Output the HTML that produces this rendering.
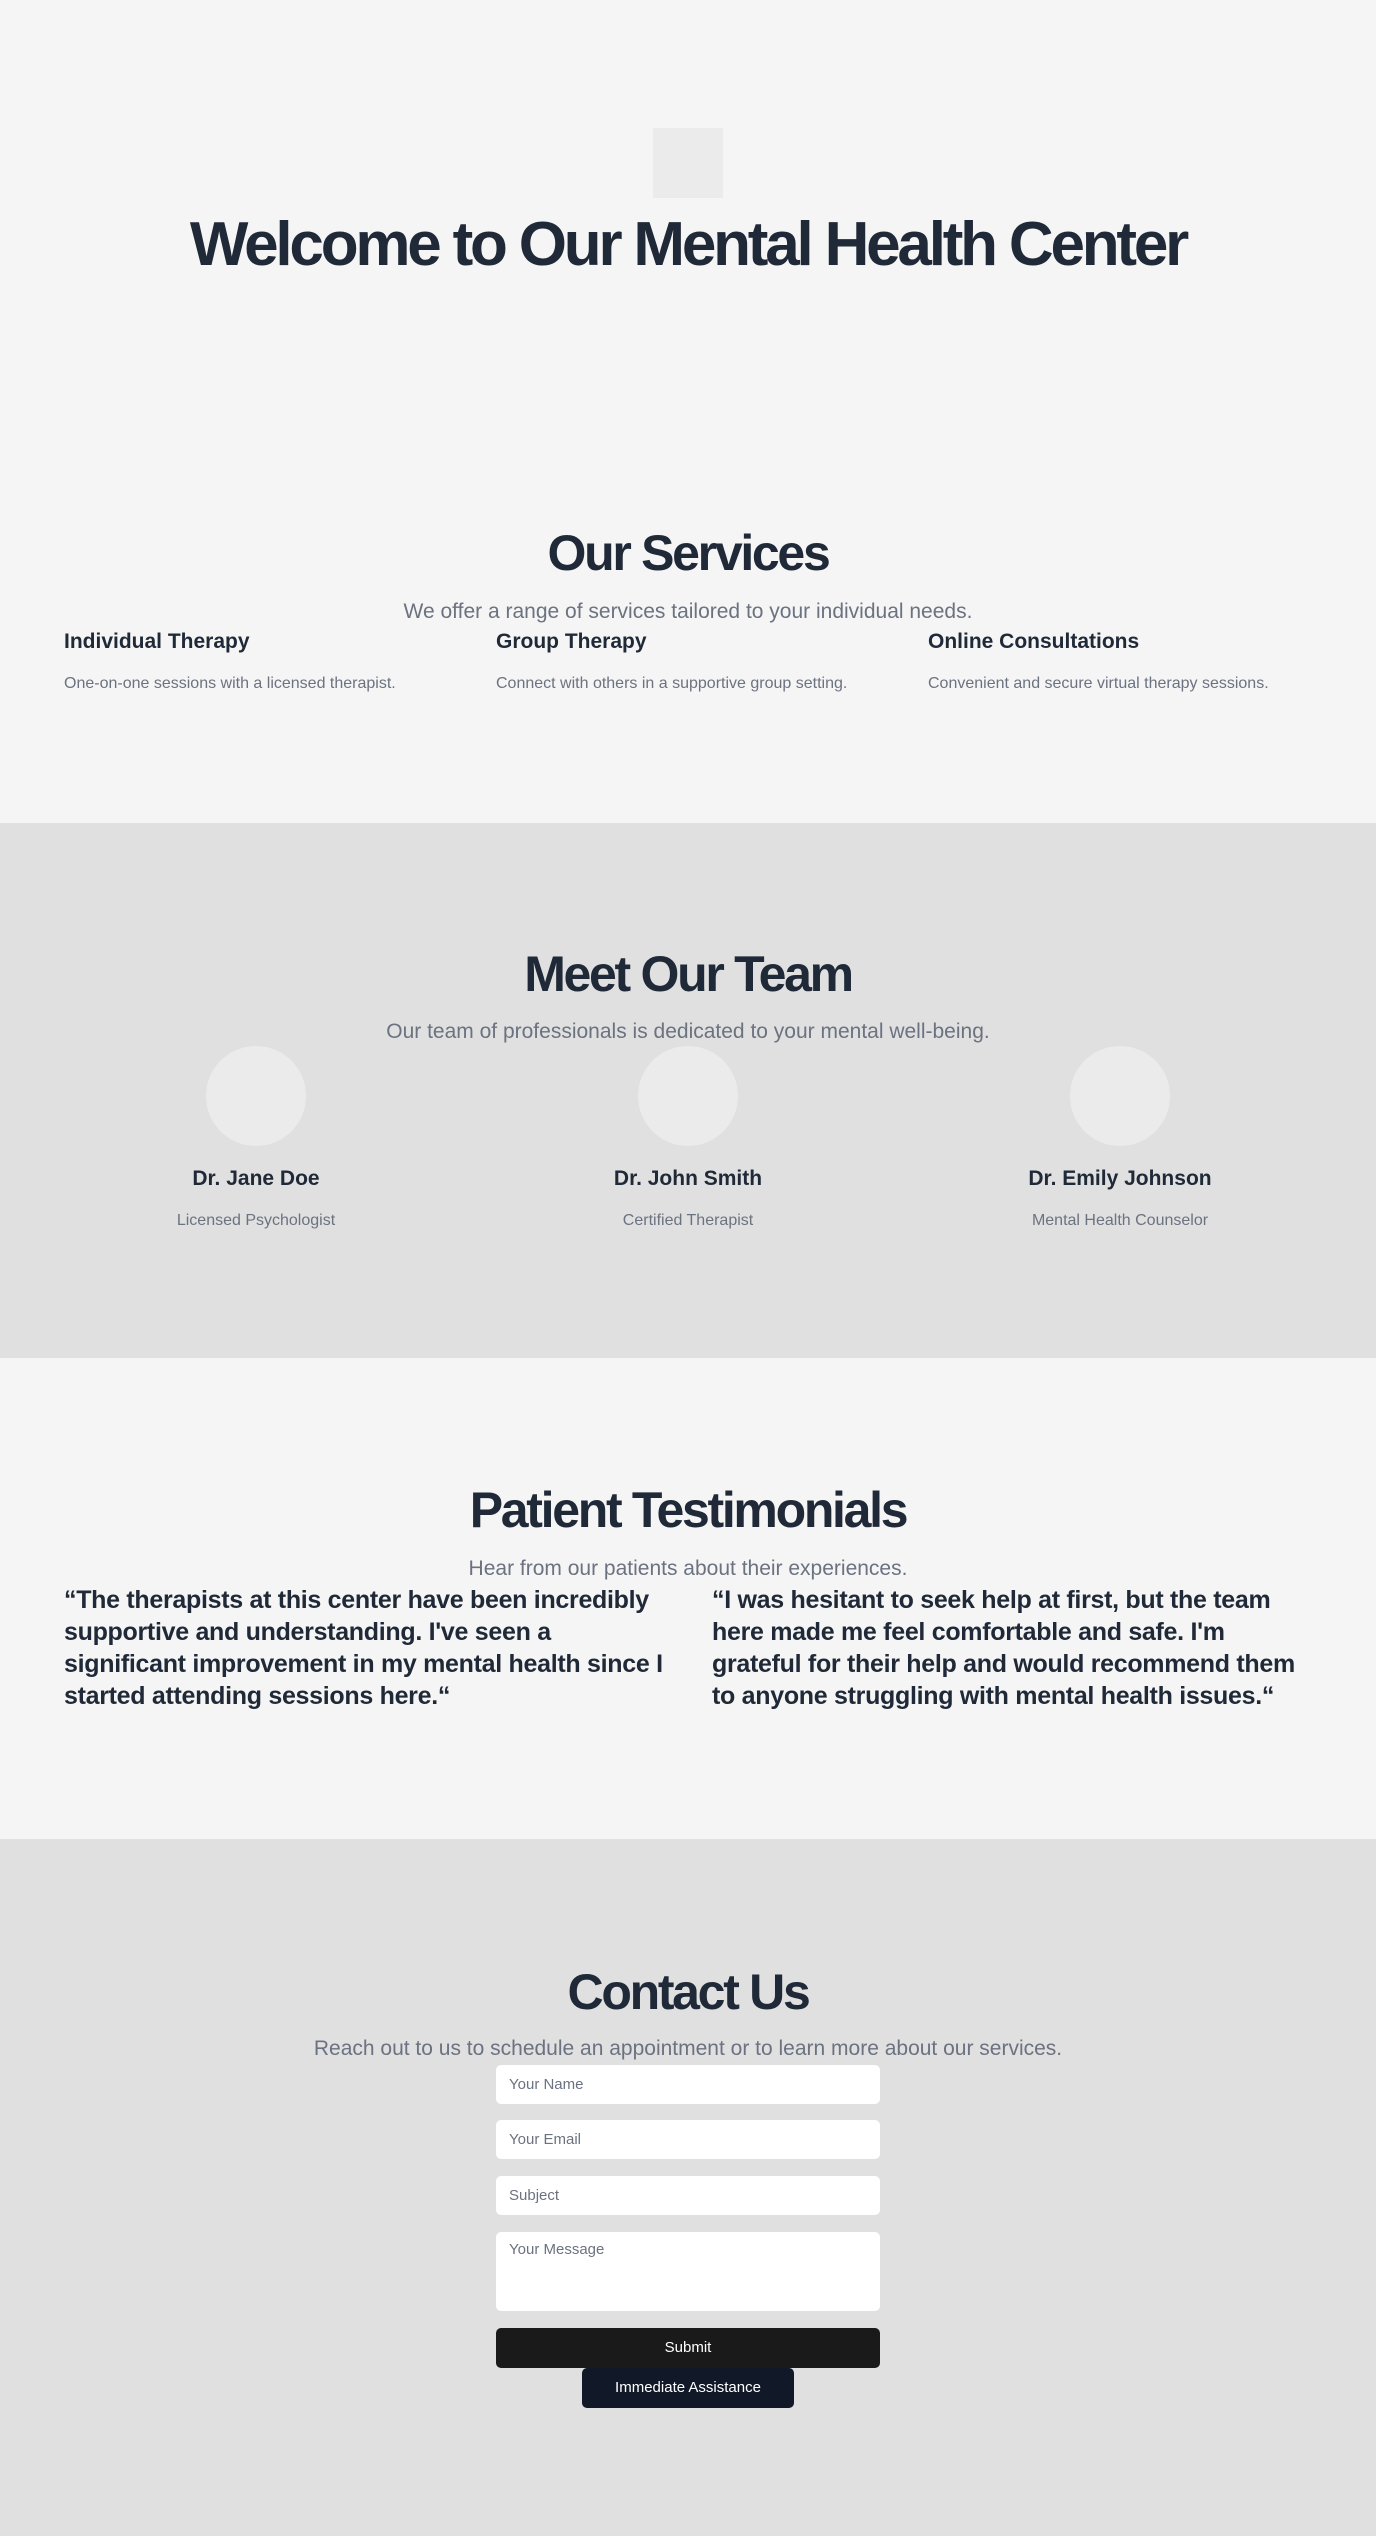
<!DOCTYPE html>
<html><head><meta charset="utf-8"><style>
*{margin:0;padding:0;box-sizing:border-box}
body{width:1376px;height:2536px;position:relative;background:#f5f5f5;font-family:"Liberation Sans",sans-serif;overflow:hidden}
.a{position:absolute}
.c{left:0;width:1376px;text-align:center}
.h{color:#1f2937;font-weight:bold}
.g{color:#6b7280}
.band{position:absolute;left:0;width:1376px;background:#e0e0e0}
.h2{font-size:50px;letter-spacing:-2.3px;line-height:60px}
.sub{font-size:21px;line-height:30px}
.st{font-size:21px;line-height:30px;color:#1f2937;font-weight:bold}
.sd{font-size:16px;line-height:24px}
.circ{width:100px;height:100px;border-radius:50%;background:#ebebeb}
.q{font-size:25px;line-height:32px;color:#1f2937;font-weight:bold;white-space:nowrap;letter-spacing:-0.3px}
.in{left:496px;width:384px;background:#fff;border-radius:5px;font-size:15px;color:#6b7280;padding:0 13px;line-height:40px}
</style></head><body>
<div class="a" style="left:653px;top:128px;width:70px;height:70px;background:#ebebeb"></div>
<div class="a c h" style="top:207px;font-size:62px;line-height:76px;letter-spacing:-3.2px">Welcome to Our Mental Health Center</div>

<div class="a c h h2" style="top:523px">Our Services</div>
<div class="a c g sub" style="top:597px">We offer a range of services tailored to your individual needs.</div>
<div class="a st" style="left:64px;top:627px">Individual Therapy</div>
<div class="a st" style="left:496px;top:627px">Group Therapy</div>
<div class="a st" style="left:928px;top:627px">Online Consultations</div>
<div class="a g sd" style="left:64px;top:672px">One-on-one sessions with a licensed therapist.</div>
<div class="a g sd" style="left:496px;top:672px">Connect with others in a supportive group setting.</div>
<div class="a g sd" style="left:928px;top:672px">Convenient and secure virtual therapy sessions.</div>

<div class="band" style="top:823px;height:535px"></div>
<div class="a c h h2" style="top:944px">Meet Our Team</div>
<div class="a c g sub" style="top:1017px">Our team of professionals is dedicated to your mental well-being.</div>
<div class="a circ" style="left:206px;top:1046px"></div>
<div class="a circ" style="left:638px;top:1046px"></div>
<div class="a circ" style="left:1070px;top:1046px"></div>
<div class="a st" style="left:56px;width:400px;text-align:center;top:1164px">Dr. Jane Doe</div>
<div class="a st" style="left:488px;width:400px;text-align:center;top:1164px">Dr. John Smith</div>
<div class="a st" style="left:920px;width:400px;text-align:center;top:1164px">Dr. Emily Johnson</div>
<div class="a g sd" style="left:56px;width:400px;text-align:center;top:1209px">Licensed Psychologist</div>
<div class="a g sd" style="left:488px;width:400px;text-align:center;top:1209px">Certified Therapist</div>
<div class="a g sd" style="left:920px;width:400px;text-align:center;top:1209px">Mental Health Counselor</div>

<div class="a c h h2" style="top:1480px">Patient Testimonials</div>
<div class="a c g sub" style="top:1554px">Hear from our patients about their experiences.</div>
<div class="a q" style="left:64px;top:1584px">“The therapists at this center have been incredibly<br>supportive and understanding. I've seen a<br>significant improvement in my mental health since I<br>started attending sessions here.“</div>
<div class="a q" style="left:712px;top:1584px">“I was hesitant to seek help at first, but the team<br>here made me feel comfortable and safe. I'm<br>grateful for their help and would recommend them<br>to anyone struggling with mental health issues.“</div>

<div class="band" style="top:1839px;height:697px"></div>
<div class="a c h h2" style="top:1962px">Contact Us</div>
<div class="a c g sub" style="top:2034px">Reach out to us to schedule an appointment or to learn more about our services.</div>
<div class="a in" style="top:2065px;height:39px">Your Name</div>
<div class="a in" style="top:2120px;height:39px">Your Email</div>
<div class="a in" style="top:2176px;height:39px">Subject</div>
<div class="a in" style="top:2232px;height:79px;line-height:36px">Your Message</div>
<div class="a" style="left:496px;top:2328px;width:384px;height:40px;background:#1a1a1a;border-radius:5px;color:#fff;font-size:15px;text-align:center;line-height:40px">Submit</div>
<div class="a" style="left:582px;top:2368px;width:212px;height:40px;background:#111827;border-radius:5px;color:#fff;font-size:15px;text-align:center;line-height:40px">Immediate Assistance</div>
</body></html>
